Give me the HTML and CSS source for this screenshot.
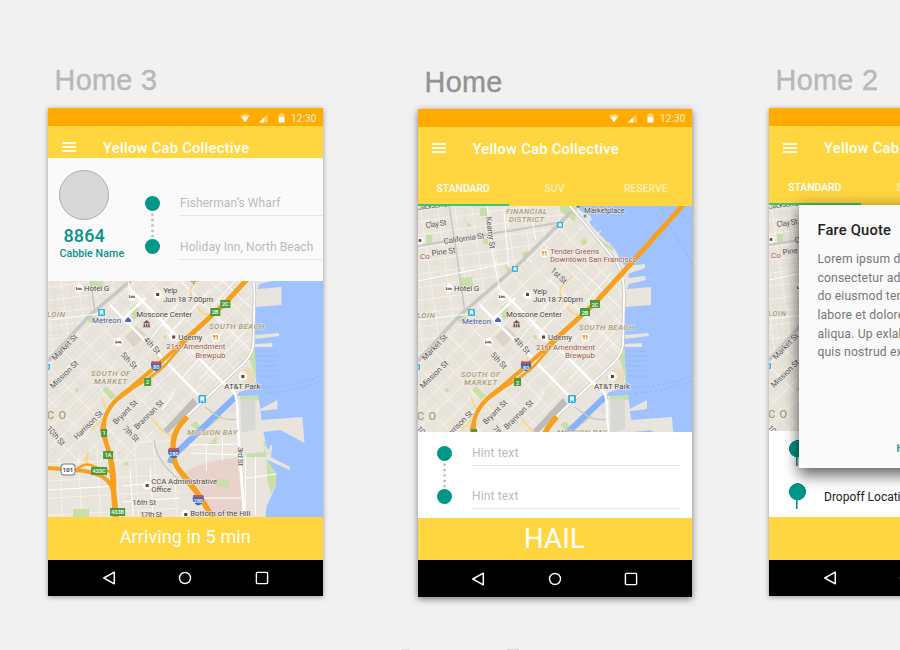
FILE: index.html
```html
<!DOCTYPE html>
<html lang="en">
<head>
<meta charset="utf-8">
<title>Yellow Cab Collective</title>
<link rel="stylesheet" href="styles.css">
</head>
<body>
<svg class="defs" width="0" height="0" aria-hidden="true">
  <defs>
    <pattern id="grid-north" width="17" height="13" patternUnits="userSpaceOnUse" patternTransform="translate(50 208) rotate(-8)">
      <path d="M0 .5H17M.5 0V13" stroke="#f4f1eb" stroke-width="1" fill="none"/><path d="M0 7H17M9 0V13" stroke="#dfdad0" stroke-width=".5" fill="none"/>
    </pattern>
    <pattern id="grid-south" width="22" height="15" patternUnits="userSpaceOnUse" patternTransform="translate(110 305) rotate(-44)">
      <path d="M0 .5H22M.5 0V15" stroke="#f4f1eb" stroke-width="1.1" fill="none"/><path d="M0 8H22M12 0V15" stroke="#dfdad0" stroke-width=".5" fill="none"/>
    </pattern>
    <pattern id="grid-bay" width="19" height="17" patternUnits="userSpaceOnUse" patternTransform="translate(116 460) rotate(-3)">
      <path d="M0 .5H19M.5 0V17" stroke="#f4f1eb" stroke-width="1" fill="none"/>
    </pattern>
    <symbol id="wifi" viewBox="0 0 12 10"><path d="M0 1.6Q6-1.6 12 1.6L6 9.5Z" fill="#fff" opacity=".45"/><path d="M2 3.6Q6 2 10 3.6L6 9.3Z" fill="#fff"/></symbol>
    <symbol id="signal" viewBox="0 0 10 10"><path d="M0 9.5 9.5 0V9.5Z" fill="#fff" opacity=".4"/><path d="M0 9.5 5.5 4V9.5Z" fill="#fff"/></symbol>
    <symbol id="battery" viewBox="0 0 7 10"><path d="M2 0H5V1H6.5V5H.5V1H2Z" fill="#fff" opacity=".45"/><path d="M.5 4.3H6.5V9.5H.5Z" fill="#fff"/></symbol>
    <symbol id="back" viewBox="0 0 14 14"><path d="M12.3 1.2V12.8L1.8 7Z" fill="none" stroke="#fff" stroke-width="1.5" stroke-linejoin="round"/></symbol>
    <symbol id="circle" viewBox="0 0 14 14"><circle cx="7" cy="7" r="5.5" fill="none" stroke="#fff" stroke-width="1.4"/></symbol>
    <symbol id="square" viewBox="0 0 14 14"><rect x="1.4" y="1.4" width="11.2" height="11.2" rx="1" fill="none" stroke="#fff" stroke-width="1.4"/></symbol>
    <symbol id="i-shield" viewBox="0 0 14 13"><path d="M2 1Q7 2.5 12 1L13 3.5Q14 10 7 12.5Q0 10 1 3.5Z" fill="#3c6db8"/><path d="M2 .7Q7 2 12 .7L13 3.6H1Z" fill="#d2524f"/></symbol>
    <symbol id="transit" viewBox="0 0 8 8"><rect width="8" height="8" rx="1" fill="#35b0e4"/><rect x="2" y="1.5" width="4" height="4" rx=".5" fill="#fff"/><path d="M2 7 3 5.5M6 7 5 5.5" stroke="#fff"/></symbol>
    <symbol id="bed" viewBox="0 0 9 9"><circle cx="4.5" cy="4.5" r="4.4" fill="#fffdfb"/><path d="M1.8 3V6M1.8 5.2H7.2V6M3.4 4.3H7" stroke="#7a4a4a" stroke-width=".9" fill="none"/></symbol>
    <symbol id="spot" viewBox="0 0 9 9"><circle cx="4.5" cy="4.5" r="4.4" fill="#fffdfb"/><rect x="3" y="3" width="3" height="3" fill="#6b3c3c"/></symbol>
    <symbol id="food" viewBox="0 0 9 9"><circle cx="4.5" cy="4.5" r="4.4" fill="#fffdfb"/><path d="M3 2V7M6 2V7M2.2 2V4H3.8V2M5.5 2V4.5" stroke="#f28b30" stroke-width=".9" fill="none"/></symbol>
    <symbol id="museum" viewBox="0 0 9 9"><path d="M1 4 4.5 1 8 4ZM1.5 4.5H3V7.5H1.5ZM3.8 4.5H5.2V7.5H3.8ZM6 4.5H7.5V7.5H6ZM.8 7.5H8.2V8.3H.8Z" fill="#7a5757"/></symbol>
  </defs>
</svg>

<template id="map-art"><svg>
  <rect x="48" y="206" width="276" height="312" fill="#a0c2ff"/>
  <path fill="#e9e5dc" d="M48 205H206L211 211 221 216 219 222 224 228 236 241 245 249 252 263 256 266 275 264 275 268 258 274 259 278 275 276 276 280 259 284 257 289 281 287 281 305 255 307 254 335 278 333 279 336 254 339 254 344 272 343 272 347 254 347 255 366 256 382 250 389 239 392 236 396 258 396 260 409 277 400 277 409 260 411 261 420 302 417 304 443 280 430 263 432 266 446 270 457 290 467 289 470 274 463 267 460 276 475 275 487 270 498 266 507 265 518H48Z"/>
  <path d="M48 205H206L48 362Z" fill="url(#grid-north)"/>
  <path d="M202 208 221 216 245 249 256 290 254 340 250 360 189 416 166 436 119 466 48 460V360Z" fill="url(#grid-south)"/>
  <path d="M48 460 170 435 180 470V518H48Z" fill="url(#grid-bay)"/>
  <path fill="#eacfca" d="M188 470Q200 462 228 459L237 457 243 517H216L196 493 180 478Z" opacity=".9"/>
  <g fill="#c9dfa8">
    <path d="M110 208H117V216H110ZM56 235H62V243H56ZM89 278 102 277 103 286 90 287ZM113 239H118V244H113ZM88 315 97 317 94 323 88 322ZM130 308 137 303 140 316 133 320ZM152 253 159 250 155 264ZM135 265 141 268 138 273ZM97 222 102 226 97 227ZM191 204 207 207 205 222 190 211ZM229 238 244 249 242 251 231 243ZM102 390 106 386 116 396 111 400ZM190 425 196 421 203 431 195 429ZM168 461 178 450 222 417 219 413 204 423ZM208 445 216 436 217 445ZM244 454 264 452 263 443 265 440 266 457 245 457ZM266 459 276 474 275 486 271 494 267 480ZM217 479H229V487H217ZM73 509H89V518H73ZM240 396 258 395 259 400 239 400ZM254 340 256 381 250 360ZM246 357 253 349 254 359 249 360Z"/>
    <circle cx="77" cy="390" r="2"/><circle cx="214" cy="242" r="3"/><circle cx="126" cy="464" r="2"/><circle cx="165" cy="337" r="2"/>
  </g>
  <path fill="#dcd4c9" d="M125 337 136 326 146 335 133 347Z"/><path d="M240 399H255V429L241 433Z" fill="#d8d8d7"/>
  <path d="M246 367Q258 371 253 386L235 378Z" fill="#eadbc0"/>
  <path d="M193 398 197 404 167 434 163 430Z" fill="#bebdbb"/>
  <path d="M236 396 176 453Q171 456 170 463" stroke="#86b2f9" stroke-width="6" fill="none"/>
  <path d="M228 408 238 399V415L226 411Z" fill="#dedfdf"/>
  <g fill="none" stroke="#c9c8c5">
    <path d="M47 246 187 223" stroke-width="2.2"/><path d="M79 205 86 250 95 313" stroke-width="1.6"/><path d="M48 361 89 316 146 267 189 224 202 211" stroke-width="3.6"/>
    <path d="M198 204 217 226 231 243 247 263Q255 276 254 300L253 345Q251 358 237 369L188 415" stroke-width="3.4"/>
    <path d="M154 440Q155 460 179 480M205 407 217 416Q226 421 237 419" stroke-width="1.4"/>
  </g>
  <g fill="none" stroke="#fff">
    <path d="M198 204 217 226 231 243 247 263Q255 276 254 300L253 345Q251 358 237 369L188 415" stroke-width="1.8"/>
    <path d="M110 305 202 399M128 287 224 384 234 392Q238 402 237 415L240 462 244 518M145 298 123 319" stroke-width="2.5"/>
    <path d="M117 205 122 250 129 287M134 212 139 267M160 209 166 240M48 281 138 263M49 320 105 313M148 342 180 301M162 410 174 392M80 435 113 402M202 498H242M189 445 238 444M190 453 240 455M206 446V471M222 438V460M245 478 276 474M245 455V515M255 457V515M130 470 133 515M150 467 153 515M48 490 115 486M122 486 179 481M122 502 180 498" stroke-width="1"/>
    <path d="M200 260 251 308M180 280 251 351M162 324 218 377M209 290 167 337M241 273 211 308M246 330 199 380M224 330 182 378" stroke-width="1"/>
  </g>
  <g fill="none" stroke="#fad58c" stroke-width="1.8">
    <path d="M193 300Q186 287 196 283L203 276M197 307Q205 320 220 310L224 300M158 357 155 366M151 418 164 433M166 433 174 438M87 464 88 452 84 462M101 397 108 413 91 430"/>
  </g>
  <g fill="none" stroke="#f7a020" stroke-linejoin="round">
    <path d="M314 204 257 268 225 303 200 326 176 348" stroke-width="5"/>
    <path d="M190 336 155 367 128 390Q104 407 104 425Q104 438 109 451Q115 470 114 490L117 518" stroke-width="4"/>
    <path d="M190 336 166 364Q153 377 136 386L116 401Q104 413 101 430L107 449Q111 465 112 490L114 518" stroke-width="2.6"/>
    <path d="M48 468 75 470Q103 472 110 484Q115 490 114 512" stroke-width="4"/>
    <path d="M77 469Q86 461 95 467L111 472" stroke-width="2.4"/>
    <path d="M187 417Q174 429 173 442Q172 462 179 470L197 493 213 518" stroke-width="5.4"/>
  </g>
  <path d="M255 351H277M255 356H278M256 361H277M257 366H276M257 371H276M258 376H278" stroke="#96b9f6" stroke-width=".8"/>
  <path d="M262 387Q296 388 324 374M265 393Q298 391 324 380M288 206 324 267M309 206 324 229" stroke="#8db3f2" stroke-width=".8" stroke-dasharray="3 2" fill="none"/>
  <path d="M264 447 270 457 271 445 267 453 272 449" stroke="#e9e5dc" stroke-width="1.5" fill="none"/>
  <g fill="#4c9c3e">
    <rect x="210" y="308" width="10" height="8"/><rect x="220" y="300" width="10" height="8"/><rect x="144" y="378" width="7" height="8"/><rect x="101" y="429" width="6" height="8"/><rect x="103" y="451" width="10" height="8"/><rect x="91" y="467" width="16" height="8"/><rect x="110" y="508" width="15" height="8"/>
  </g>
  <g class="exit"><text x="215" y="314.5">2B</text><text x="225" y="306.5">2C</text><text x="147.5" y="384.5">2</text><text x="104" y="435.5">1</text><text x="108" y="457.5">1A</text><text x="99" y="473.5">433C</text><text x="117.5" y="514.5">433B</text></g>
  <use href="#i-shield" x="150" y="360" width="12" height="12"/><use href="#i-shield" x="166" y="447" width="15" height="12"/><use href="#i-shield" x="190" y="494" width="16" height="12"/>
  <g class="exit"><text x="156" y="369.5">80</text><text x="173.5" y="456">280</text><text x="198" y="503">280</text></g>
  <rect x="61" y="464" width="14" height="11" rx="3" fill="#fff" stroke="#777"/><text class="route" x="68" y="472">101</text>
  <use href="#transit" x="98" y="309" width="7" height="7"/><use href="#transit" x="142" y="266" width="6" height="6"/><use href="#transit" x="187" y="222" width="6" height="6"/><use href="#transit" x="198" y="395" width="8" height="8"/><use href="#transit" x="44" y="364" width="6" height="6"/>
  <use href="#bed" x="74.500" y="284" width="9" height="9"/><use href="#bed" x="127.500" y="292" width="9" height="9"/><use href="#bed" x="114" y="337.500" width="9" height="9"/>
  <use href="#spot" x="153" y="290" width="9" height="9"/><use href="#spot" x="169" y="332.500" width="9" height="9"/><use href="#spot" x="142.500" y="481" width="9" height="9"/><use href="#spot" x="181" y="510" width="9" height="9"/><use href="#spot" x="238" y="372" width="9" height="9"/><use href="#spot" x="46" y="236" width="8" height="9"/>
  <use href="#food" x="211" y="333" width="9" height="9"/><use href="#food" x="170" y="249" width="9" height="9"/><use href="#museum" x="142" y="319" width="9" height="9"/>
  <circle cx="128" cy="320" r="4.300" fill="#fff"/><path d="M125 322V320L128 317 131 320V322Z" fill="#5363c9"/><circle cx="208" cy="206" r="1.700" fill="#4d6fd0"/><circle cx="215" cy="216" r="1.500" fill="#5a8ff0"/>
  <g class="area">
    <text x="136" y="213.500" textLength="41">FINANCIAL</text><text x="139" y="221.500" textLength="35">DISTRICT</text>
    <text x="47" y="317.500" textLength="18">LOIN</text><text x="209" y="329.500" textLength="55">SOUTH BEACH</text>
    <text x="91" y="376.500" textLength="39">SOUTH OF</text><text x="94" y="384.500" textLength="33">MARKET</text>
    <text x="187" y="435" textLength="50">MISSION BAY</text><text class="city" x="47" y="419.500" textLength="19">CO</text>
  </g>
  <g class="place">
    <text x="214" y="212.500" textLength="41">Marketplace</text><text x="84" y="291" textLength="25">Hotel G</text><text x="163" y="293.500" textLength="14">Yelp</text><text x="163" y="302" textLength="50">Jun 18 7:00pm</text>
    <text x="136" y="317" textLength="56">Moscone Center</text><text class="blue" x="92" y="323.500" textLength="29">Metreon</text><text x="178" y="340" textLength="24">Udemy</text><text x="224" y="389" textLength="36">AT&amp;T Park</text>
    <text x="151" y="484" textLength="66">CCA Administrative</text><text x="151" y="492.500" textLength="20">Office</text><text x="190" y="516.500" textLength="60">Bottom of the Hill</text>
    <g class="red"><text x="180" y="253.500" textLength="49">Tender Greens</text><text x="180" y="261.500" textLength="87">Downtown San Francisco</text><text x="166" y="349.500" textLength="59">21st Amendment</text><text x="195" y="358" textLength="30">Brewpub</text><text x="50" y="259">Co</text></g>
  </g>
  <g class="street">
    <text transform="translate(48 210) rotate(-7)" textLength="32">Jackson St</text><text transform="translate(56 228) rotate(-8)" textLength="21">Clay St</text><text transform="translate(74 244) rotate(-8)" textLength="41">California St</text><text transform="translate(62 256) rotate(-8)" textLength="24">Pine St</text>
    <text transform="translate(116 217) rotate(83)" textLength="32">Kearny St</text><text transform="translate(180 271) rotate(44)" textLength="19">1st St</text>
    <text transform="translate(55 361) rotate(-46)" textLength="33">Market St</text><text transform="translate(53 389) rotate(-44)" textLength="36">Mission St</text>
    <text transform="translate(143 340) rotate(47)" textLength="20">4th St</text><text transform="translate(120 355) rotate(47)" textLength="20">5th St</text>
    <text transform="translate(77 440) rotate(-45)" textLength="37">Harrison St</text><text transform="translate(116 425) rotate(-45)" textLength="31">Bryant St</text><text transform="translate(137 430) rotate(-45)" textLength="38">Brannan St</text>
    <text transform="translate(122 429) rotate(44)" textLength="19">7th St</text><text transform="translate(46 429) rotate(48)" textLength="23">10th St</text><text transform="translate(238 447) rotate(90)" textLength="19">3rd St</text>
    <text x="132" y="505" textLength="24">16th St</text><text x="140" y="517.500" textLength="22">17th St</text>
  </g>
</svg></template>

<main class="canvas">
  <section class="board">
    <h2 class="board-name">Home 3</h2>
    <div class="phone">
      <div class="status"><svg class="i-wifi"><use href="#wifi"/></svg><svg class="i-signal"><use href="#signal"/></svg><svg class="i-battery"><use href="#battery"/></svg><span>12:30</span></div>
      <header class="appbar appbar-short"><i class="menu"></i><h1>Yellow Cab Collective</h1></header>
      <div class="ride">
        <div class="cabbie"><div class="avatar"></div><strong>8864</strong><span>Cabbie Name</span></div>
        <div class="track"><i></i><b></b><i></i></div>
        <div class="fields"><p>Fisherman’s Wharf</p><p>Holiday Inn, North Beach</p></div>
      </div>
      <svg class="map map-tall" viewBox="48 281 274 236" preserveAspectRatio="none"></svg>
      <div class="action arriving">Arriving in 5 min</div>
      <nav class="nav"><svg><use href="#back"/></svg><svg><use href="#circle"/></svg><svg><use href="#square"/></svg></nav>
    </div>
  </section>

  <section class="board board-main">
    <h2 class="board-name">Home</h2>
    <div class="phone">
      <div class="status"><svg class="i-wifi"><use href="#wifi"/></svg><svg class="i-signal"><use href="#signal"/></svg><svg class="i-battery"><use href="#battery"/></svg><span>12:30</span></div>
      <header class="appbar"><i class="menu"></i><h1>Yellow Cab Collective</h1></header>
      <div class="tabs"><span class="on">STANDARD</span><span>SUV</span><span>RESERVE</span></div>
      <svg class="map" viewBox="48 206 274 226" preserveAspectRatio="none"></svg>
      <div class="form">
        <div class="track"><i></i><b></b><i></i></div>
        <div class="fields"><p>Hint text</p><p>Hint text</p></div>
      </div>
      <div class="action hail">HAIL</div>
      <nav class="nav"><svg><use href="#back"/></svg><svg><use href="#circle"/></svg><svg><use href="#square"/></svg></nav>
    </div>
  </section>

  <section class="board board-quote">
    <h2 class="board-name">Home 2</h2>
    <div class="phone">
      <div class="status"></div>
      <header class="appbar"><i class="menu"></i><h1>Yellow Cab Collective</h1></header>
      <div class="tabs"><span class="on">STANDARD</span><span>SUV</span><span>RESERVE</span></div>
      <svg class="map" viewBox="48 206 274 226" preserveAspectRatio="none"></svg>
      <div class="form pins">
        <div class="pin-row"><i class="pin"></i></div>
        <div class="pin-row"><i class="pin"></i><span>Dropoff Location</span></div>
      </div>
      <div class="action"></div>
      <nav class="nav"><svg><use href="#back"/></svg><svg><use href="#circle"/></svg><svg><use href="#square"/></svg></nav>
      <div class="dialog">
        <h3>Fare Quote</h3>
        <p>Lorem ipsum dolor sit<br>consectetur adipiscing<br>do eiusmod tempor<br>labore et dolore magna<br>aliqua. Up exlaboris<br>quis nostrud exercit</p>
        <button>HAIL</button>
      </div>
    </div>
  </section>
</main>
<footer class="next-row"><i></i><i></i></footer>
<script src="map.js"></script>
</body>
</html>
```
FILE: styles.css
```css
* { box-sizing: border-box; }
body { margin: 0; width: 900px; height: 650px; overflow: hidden; background: #f1f1f1; font-family: Roboto, sans-serif; }
h1, h2, h3, p { margin: 0; font-weight: 400; }
.defs { position: absolute; }
.canvas { display: flex; height: 648px; padding: 63px 0 0 48px; overflow: hidden; }
.board { flex: none; width: 274.5px; }
.board-main { margin: 1px 77.500px 0 95px; width: 274px; }
.board-name { height: 45px; padding-left: 6.500px; font: 28.800px/34px "Liberation Sans", sans-serif; letter-spacing: .35px; color: #b8b8b8; -webkit-text-stroke: .4px #b8b8b8; white-space: nowrap; }
.board-main .board-name { padding: 1px 0 0 7px; color: #929492; -webkit-text-stroke-color: #929492; }

.phone { position: relative; display: flex; flex-direction: column; height: 488px; background: #fff; box-shadow: 0 1px 5px rgba(0,0,0,.38); }
.board-main .phone { box-shadow: 0 2px 7px rgba(0,0,0,.5); }
.status { flex: none; display: flex; align-items: center; justify-content: flex-end; height: 18px; padding: 2px 6px 0 0; background: #ffab00; color: #fff3d6; font-size: 10px; letter-spacing: .1px; }
.board-main .status { padding-top: 0; }
.i-wifi { width: 10px; height: 9px; margin-right: 9px; }
.i-signal { width: 9px; height: 9px; margin-right: 10px; }
.i-battery { width: 7px; height: 10px; margin-right: 6px; }
.appbar { flex: none; display: flex; align-items: center; height: 45px; padding-left: 14px; background: #ffd640; color: #fff; }
.board-quote .appbar { padding-bottom: 2px; }
.board-main .appbar { padding-bottom: 1px; }
.appbar-short { height: 32px; align-items: flex-start; padding-top: 12px; }
.menu { width: 14px; height: 10px; border: solid #fffbe8; border-width: 2px 0; background: linear-gradient(#fffbe8, #fffbe8) center / 100% 2px no-repeat; }
.appbar-short .menu { margin-top: 4px; }
.board-main .menu { margin-bottom: 2px; }
.appbar h1 { margin-left: 27px; font-size: 14.700px; line-height: 20px; font-weight: 500; letter-spacing: .27px; white-space: nowrap; }
.tabs { flex: none; display: flex; height: 34px; background: #ffd640; }
.tabs span { flex: 1; text-align: center; font-size: 10.400px; font-weight: 500; line-height: 34px; color: #fff0b7; border-bottom: 2px solid transparent; }
.tabs .on { color: #fff; border-color: #43c178; }

.map { flex: none; display: block; width: 100%; height: 226px; background: #e9e5dc; overflow: hidden; }
.map-tall { height: 236px; }
.map text { font-family: Roboto, sans-serif; }
.map .place text { font-size: 7.900px; fill: #444; stroke: #f4f1ea; stroke-width: 1px; paint-order: stroke; }
.map .place .blue { fill: #47529e; }
.map .place .red text { fill: #9c554f; }
.map .street text { font-size: 8px; fill: #555; stroke: #f1eee8; stroke-width: 1px; paint-order: stroke; }
.map .area text { font-size: 7.700px; font-style: italic; font-weight: 500; fill: #a79c7d; stroke: #f1ede2; stroke-width: .8px; paint-order: stroke; }
.map .area .city { font-size: 11px; font-style: normal; }
.map .exit text { font-size: 5.500px; font-weight: 500; fill: #fff; text-anchor: middle; }
.map .route { font-size: 6px; font-weight: 700; fill: #444; text-anchor: middle; }

.ride { flex: none; display: flex; height: 123px; background: #fafafa; overflow: hidden; }
.cabbie { width: 97px; padding: 12px 0 0 11.400px; color: #009688; white-space: nowrap; }
.avatar { width: 50px; height: 50px; border: 1px solid #acacac; border-radius: 50%; background: #d8d8d8; }
.cabbie strong { display: block; margin: 5px 0 0 4px; font-size: 18px; line-height: 22px; font-weight: 500; letter-spacing: .15px; }
.cabbie span { display: block; font-size: 10.700px; line-height: 14px; font-weight: 500; letter-spacing: .05px; }
.track { display: flex; flex-direction: column; align-items: center; width: 15px; }
.track i { width: 15.500px; height: 15.500px; border-radius: 50%; background: #009688; }
.track b { width: 2.600px; height: 27.500px; background: radial-gradient(circle, #c3c3c3 1.200px, transparent 1.500px) 0 1px / 2.600px 5.400px repeat-y; }
.ride .track { padding-top: 37.500px; }
.ride .fields { flex: 1; padding: 32px 0 0 20px; }
.fields p { height: 26px; line-height: 27px; margin-bottom: 18px; border-bottom: 1px solid #e6e6e6; font-size: 12px; letter-spacing: .08px; color: #bbb; white-space: nowrap; }
.form { flex: none; display: flex; height: 86px; padding-left: 19.500px; background: #fff; }
.form .track { padding-top: 13.500px; }
.form .fields { flex: 1; padding: 8px 12px 0 20px; }
.form .fields p { margin-bottom: 17px; letter-spacing: .15px; }

.action { flex: none; height: 43px; background: #ffd640; color: #fff; text-align: center; }
.arriving { font-size: 18px; line-height: 40px; letter-spacing: .1px; }
.hail { height: 42px; font-size: 27.500px; line-height: 42px; letter-spacing: .2px; }
.nav { flex: 1; display: flex; align-items: center; gap: 62.500px; padding-left: 53.500px; background: #000; }
.nav svg { width: 14px; height: 14px; }

.pins { flex-direction: column; }
.pin-row { display: flex; height: 43px; padding-top: 8.500px; }
.pin { display: block; width: 17px; height: 26px; background: linear-gradient(#009688, #009688) center 16px / 1.600px 10px no-repeat, radial-gradient(circle 8.500px at 50% 8.700px, #009688 8.300px, transparent 8.700px); }
.pin-row span { margin: 5px 0 0 18.500px; font-size: 12px; line-height: 18px; color: #222; white-space: nowrap; }
.dialog { position: absolute; left: 30.400px; top: 97.400px; width: 213px; height: 263px; padding: 15px 18px; background: #fafafa; box-shadow: 0 8px 14px rgba(0,0,0,.5), 0 0 14px rgba(0,0,0,.25); white-space: nowrap; overflow: hidden; }
.dialog h3 { font-size: 14.700px; line-height: 20px; font-weight: 500; letter-spacing: .2px; color: #222; }
.dialog p { margin-top: 9.500px; font-size: 12.200px; line-height: 18.650px; letter-spacing: .15px; color: #777; }
.dialog button { display: block; margin: 79px 0 0 79px; padding: 0; border: 0; background: none; font: 500 11px/16px Roboto, sans-serif; color: #009688; }
.next-row { display: flex; gap: 97px; padding: 1px 0 0 401px; }
.next-row i { width: 9px; height: 1px; background: #dedede; }
.next-row i + i { width: 12px; background: #d5d5d5; }
```
FILE: map.js
```js
const art = document.getElementById('map-art').content.querySelector('svg').innerHTML;

document.querySelectorAll('.map').forEach((map) => {
  map.innerHTML = art;
  const view = map.getBoundingClientRect();
  const dialog = map.parentElement.querySelector('.dialog');
  const right = dialog ? dialog.getBoundingClientRect().left : view.right;
  // Drop the labels that fall outside the visible part of this map.
  map.querySelectorAll('text').forEach((label) => {
    const box = label.getBoundingClientRect();
    if (box.bottom < view.top + 2 || box.top > view.bottom - 1 || box.left > right) label.remove();
  });
});
```
